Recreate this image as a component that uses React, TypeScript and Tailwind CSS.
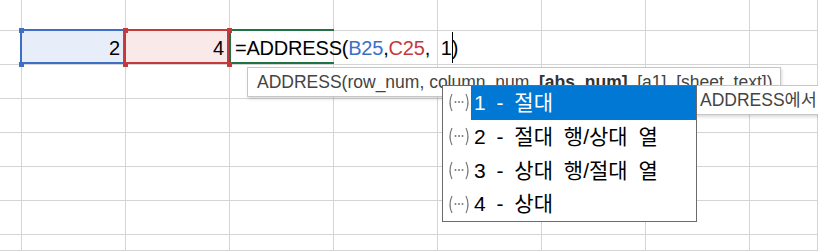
const FONT = "font-['Liberation_Sans','Noto_Sans_CJK_KR',sans-serif]"

const COLS = 9
const ROWS = 8

const options = ['1 - 절대', '2 - 절대 행/상대 열', '3 - 상대 행/절대 열', '4 - 상대']

function Handle({ className }: { className: string }) {
  return <span className={`absolute z-10 h-[5px] w-[5px] ${className}`} />
}

function Cell({ r, c }: { r: number; c: number }) {
  const base = 'relative border-r border-b border-[#d4d4d4]'
  if (r === 1 && c === 1) {
    return (
      <div className={`${base} bg-[#e8eef9]`}>
        <div className="absolute -left-[2px] -top-[2px] right-0 bottom-0 border-2 border-[#3d6fc6]" />
        <Handle className="-left-[3px] -top-[3px] bg-[#3d6fc6]" />
        <Handle className="-left-[3px] -bottom-[3px] bg-[#3d6fc6]" />
        <div className="relative pr-[5px] pt-px text-right text-[20px] leading-[33px] text-black">2</div>
      </div>
    )
  }
  if (r === 1 && c === 2) {
    return (
      <div className={`${base} bg-[#f9e9e9]`}>
        <div className="absolute -left-[2px] -top-[2px] right-0 bottom-0 border-2 border-[#c4393c]" />
        <Handle className="-left-[3px] -top-[3px] bg-[#c4393c]" />
        <Handle className="-left-[3px] -bottom-[3px] bg-[#c4393c]" />
        <Handle className="-right-[3px] -top-[3px] bg-[#c4393c]" />
        <Handle className="-right-[3px] -bottom-[3px] bg-[#c4393c]" />
        <div className="relative pr-[5px] pt-px text-right text-[20px] leading-[33px] text-black">4</div>
      </div>
    )
  }
  if (r === 1 && c === 3) {
    return (
      <div className={`${base} bg-white`}>
        <div className="absolute -left-[1px] -top-[2px] -right-[1px] bottom-0 border-y-2 border-l-2 border-[#217346]" />
        <div className="relative z-20 whitespace-pre pl-[5px] pt-px text-[20px] leading-[33px] tracking-[-0.2px] text-black">
          =ADDRESS(<span className="text-[#3d6fc6]">B25</span>,<span className="text-[#c4393c]">C25</span>,{'  '}1
          <span className="inline-block h-[31px] w-px -mr-px bg-black align-[-8px]" />)
        </div>
      </div>
    )
  }
  return <div className={base} />
}

function DotsIcon() {
  return (
    <svg width="24" height="19" viewBox="0 0 24 19" fill="none" className="shrink-0">
      <path d="M5 1 Q1 9.5 5 18" stroke="#7a7a7a" strokeWidth="1.2" />
      <path d="M19 1 Q23 9.5 19 18" stroke="#7a7a7a" strokeWidth="1.2" />
      <circle cx="8.5" cy="9" r="1" fill="#7a7a7a" />
      <circle cx="12" cy="9" r="1" fill="#7a7a7a" />
      <circle cx="15.5" cy="9" r="1" fill="#7a7a7a" />
    </svg>
  )
}

export default function App() {
  return (
    <div className={`relative h-[251px] w-[818px] overflow-hidden bg-white ${FONT}`}>
      <div className="grid h-full grid-cols-[22px_repeat(7,104px)_1fr] grid-rows-[31px_repeat(6,34px)_1fr]">
        {Array.from({ length: ROWS }).map((_, r) =>
          Array.from({ length: COLS }).map((_, c) => <Cell key={`${r}-${c}`} r={r} c={c} />),
        )}
      </div>

      {/* argument hint */}
      <div className="absolute left-[247px] top-[67px] z-30 h-[30px] w-[534px] border border-[#c6c6c6] bg-white pl-[9px] text-[17.5px] leading-[28px] whitespace-nowrap text-[#444] shadow-[1px_2px_3px_rgba(0,0,0,0.15)]">
        ADDRESS(row_num, column_num, <b className="text-[#333]">[abs_num]</b>, [a1], [sheet_text])
      </div>

      {/* description, runs off the window edge */}
      <div className="absolute left-[695px] top-[85px] z-30 h-[30px] w-[300px] border border-[#c6c6c6] bg-white pl-[4px] text-[17.5px] leading-[28px] whitespace-nowrap text-[#444] shadow-[1px_2px_3px_rgba(0,0,0,0.15)]">
        ADDRESS에서 반환할 참조 유형을 지정합니다.
      </div>

      {/* autocomplete list */}
      <div className="absolute left-[442px] top-[85px] z-40 flex h-[137px] w-[255px] flex-col border border-[#6b6b6b] bg-white">
        {options.map((o, i) => (
          <div key={o} className="flex h-[34px] items-center pl-[4px]">
            <DotsIcon />
            <div
              className={`flex h-full flex-1 items-center whitespace-pre pl-[3px] text-[21px] [word-spacing:5px] ${
                i === 0 ? 'bg-[#0078d4] text-white' : 'text-black'
              }`}
            >
              {o}
            </div>
          </div>
        ))}
      </div>
    </div>
  )
}
